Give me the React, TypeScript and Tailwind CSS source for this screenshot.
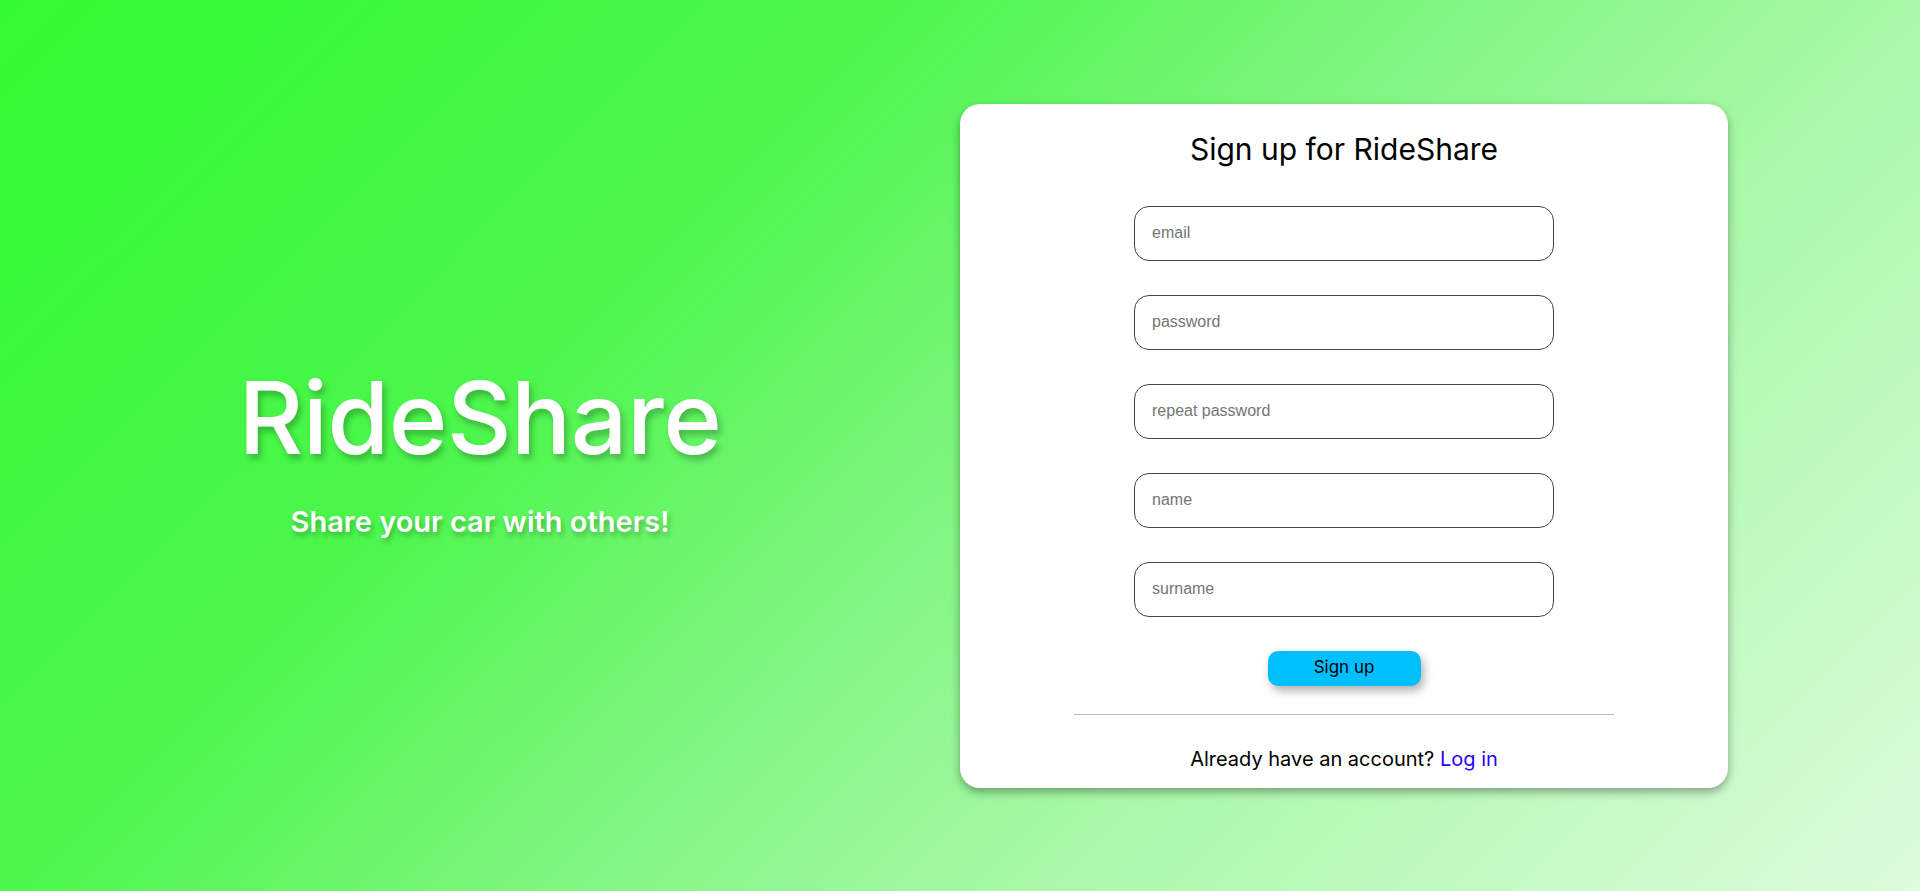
const fields = ['email', 'password', 'repeat password', 'name', 'surname'];

const App = () => {
  return (
    <div className="min-h-screen w-full flex bg-[linear-gradient(135deg,#33f933_0%,#4cf64c_32%,#7af57a_49%,#a8f8a8_68%,#ddfbdd_100%)] font-['Inter','Noto_Sans',sans-serif]">
      <div className="w-1/2 flex flex-col items-center justify-center pt-[6px]">
        <h1 className="text-[100px] leading-[120px] font-medium text-white tracking-[-0.5px] [text-shadow:3px_5px_6px_rgba(0,0,0,0.25)]">
          RideShare
        </h1>
        <p className="mt-[26px] text-[29px] leading-[36px] font-semibold text-white [text-shadow:2px_4px_5px_rgba(0,0,0,0.25)]">
          Share your car with others!
        </p>
      </div>

      <div className="w-1/2 flex items-center">
        <div className="w-[768px] bg-white rounded-[20px] shadow-[0_4px_10px_rgba(0,0,0,0.35)] flex flex-col items-center pt-[27px] pb-[15px]">
          <h2 className="text-[30px] leading-[36px] text-black">Sign up for RideShare</h2>

          <form className="mt-[39px] flex flex-col items-center gap-[34px]" onSubmit={(e) => e.preventDefault()}>
            {fields.map((f) => (
              <input
                key={f}
                type={f.includes('password') ? 'password' : 'text'}
                placeholder={f}
                className="w-[420px] h-[55px] rounded-[15px] border border-[#444] px-[17px] text-[16px] font-['Liberation_Sans',Arial,sans-serif] placeholder:text-[#757575] outline-none"
              />
            ))}
          </form>

          <button className="mt-[34px] w-[153px] h-[35px] rounded-[10px] bg-[#00bfff] text-[17px] text-black shadow-[3px_5px_10px_rgba(0,0,0,0.3)]">
            Sign up
          </button>

          <div className="mt-[28px] w-[540px] h-px bg-[#bbbbbb]" />

          <p className="mt-[30px] text-[20px] leading-[28px] text-black">
            Already have an account? <a href="#" className="text-[#2b00ff]">Log in</a>
          </p>
        </div>
      </div>
    </div>
  );
};

export default App;
